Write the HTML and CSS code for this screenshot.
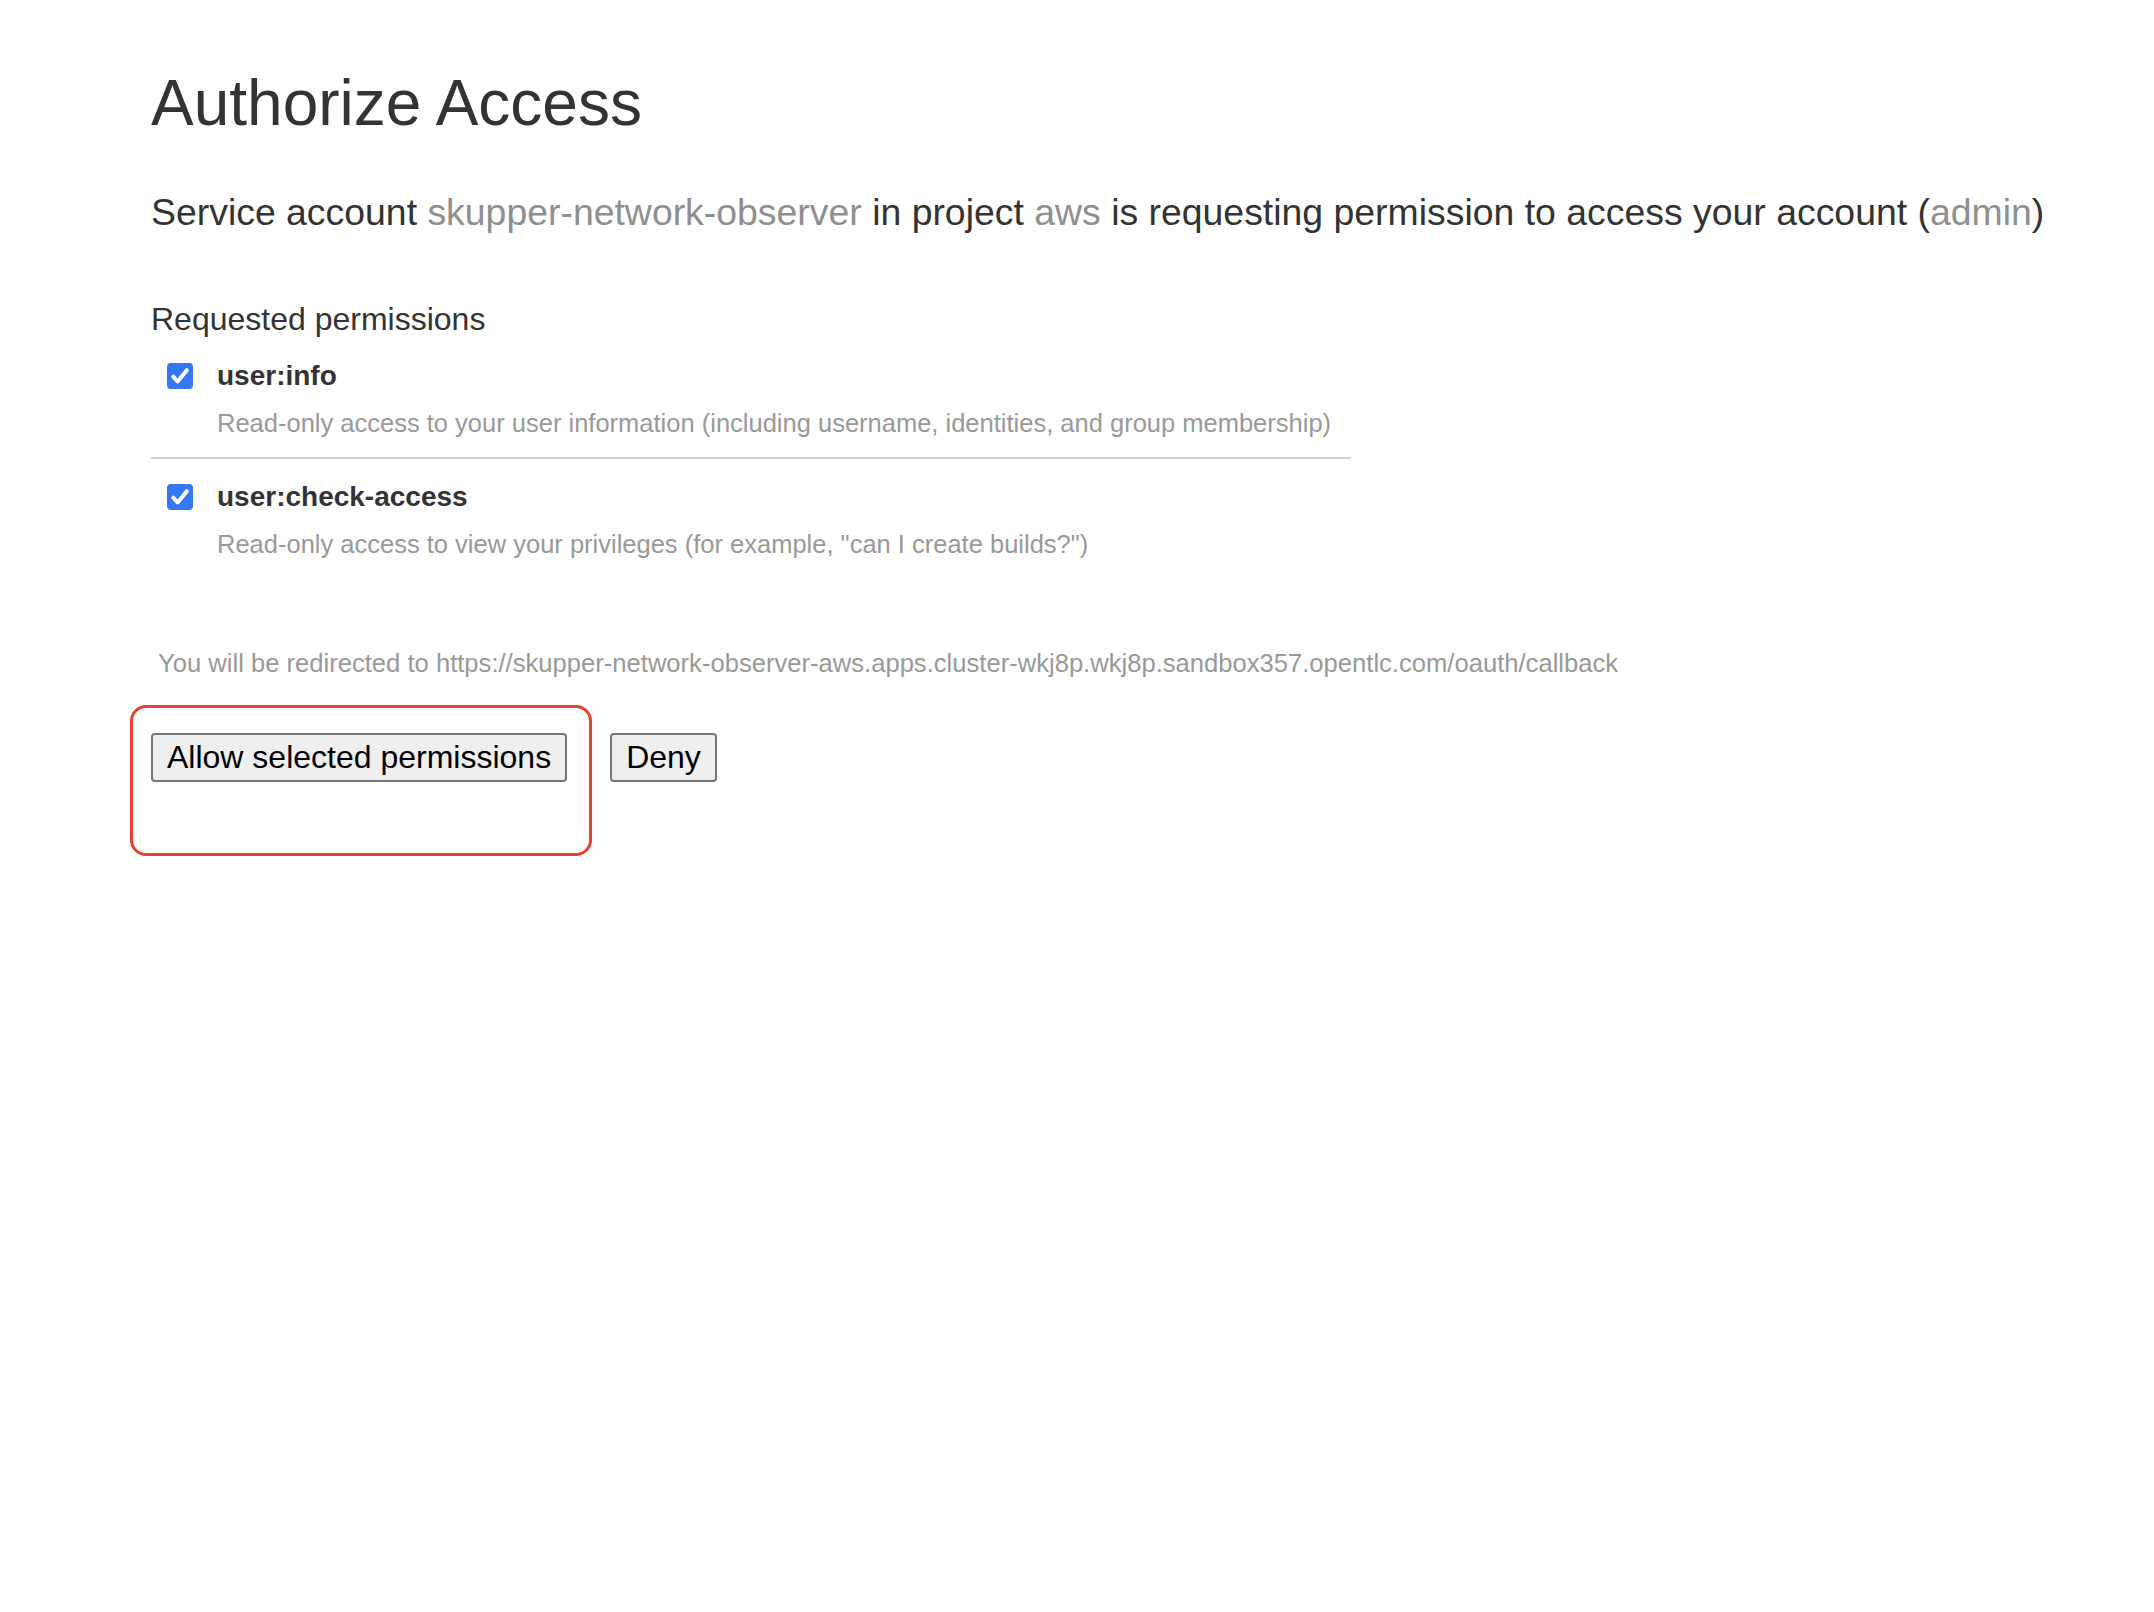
FILE: index.html
```html
<!DOCTYPE html>
<html lang="en">
<head>
<meta charset="utf-8">
<title>Authorize Access</title>
<link rel="stylesheet" href="styles.css">
</head>
<body>
<main class="page">
  <h1 class="title">Authorize Access</h1>
  <p class="lead">Service account <span class="muted">skupper-network-observer</span> in project <span class="muted">aws</span> is requesting permission to access your account (<span class="muted">admin</span>)</p>

  <h2 class="section">Requested permissions</h2>
  <ul class="perms">
    <li class="perm">
      <div class="perm-head">
        <span class="check"><svg viewBox="0 0 26 26" width="26" height="26"><rect x="0" y="0" width="26" height="26" rx="4" fill="#3478f6"/><path d="M6.2 13.6 L10.6 18.4 L19.8 7.2" fill="none" stroke="#fff" stroke-width="4" stroke-linecap="round" stroke-linejoin="round"/></svg></span>
        <span class="perm-name">user:info</span>
      </div>
      <div class="perm-desc">Read-only access to your user information (including username, identities, and group membership)</div>
    </li>
    <li class="perm">
      <div class="perm-head">
        <span class="check"><svg viewBox="0 0 26 26" width="26" height="26"><rect x="0" y="0" width="26" height="26" rx="4" fill="#3478f6"/><path d="M6.2 13.6 L10.6 18.4 L19.8 7.2" fill="none" stroke="#fff" stroke-width="4" stroke-linecap="round" stroke-linejoin="round"/></svg></span>
        <span class="perm-name">user:check-access</span>
      </div>
      <div class="perm-desc">Read-only access to view your privileges (for example, "can I create builds?")</div>
    </li>
  </ul>

  <p class="redirect">You will be redirected to https://skupper-network-observer-aws.apps.cluster-wkj8p.wkj8p.sandbox357.opentlc.com/oauth/callback</p>

  <div class="actions">
    <div class="allow-wrap">
      <button class="btn" type="button">Allow selected permissions</button>
      <span class="highlight"></span>
    </div>
    <button class="btn" type="button">Deny</button>
  </div>
</main>
</body>
</html>
```

FILE: styles.css
```css
html, body {
  margin: 0;
  padding: 0;
  background: #ffffff;
}

body {
  font-family: "Liberation Sans", Arial, Helvetica, sans-serif;
  color: #333333;
}

.page {
  box-sizing: border-box;
  min-height: 100vh;
  padding: 65px 0 0 151px;
}

.title {
  margin: 0;
  font-size: 64px;
  line-height: 76px;
  font-weight: 400;
  color: #333333;
}

.lead {
  margin: 49px 0 0 0;
  font-size: 37.4px;
  line-height: 44px;
  color: #333333;
  white-space: nowrap;
}

.muted {
  color: #8f8f8f;
}

.section {
  margin: 66px 0 0 0;
  font-size: 32px;
  line-height: 38px;
  font-weight: 400;
  color: #333333;
}

.perms {
  list-style: none;
  margin: 21px 0 0 0;
  padding: 0;
  width: 1200px;
}

.perm {
  padding-bottom: 18px;
}

.perm + .perm {
  border-top: 2px solid #d2d2d2;
  padding-top: 21px;
  padding-bottom: 20px;
}

.perm-head {
  display: flex;
  align-items: center;
  gap: 24px;
  padding-left: 16px;
  height: 34px;
}

.check {
  display: flex;
  width: 26px;
  height: 26px;
}

.perm-name {
  font-size: 28px;
  line-height: 34px;
  font-weight: 700;
  color: #333333;
}

.perm-desc {
  margin: 14px 0 0 66px;
  font-size: 25.5px;
  line-height: 32px;
  color: #999999;
}

.redirect {
  margin: 67px 0 0 7px;
  font-size: 25.6px;
  line-height: 32px;
  color: #999999;
  white-space: nowrap;
}

.actions {
  display: flex;
  align-items: flex-start;
  gap: 43px;
  margin-top: 54px;
}

.allow-wrap {
  position: relative;
  display: flex;
}

.btn {
  font-family: "Liberation Sans", Arial, Helvetica, sans-serif;
  font-size: 32px;
  line-height: 37px;
  height: 49px;
  padding: 4px 14px;
  color: #000000;
  background: #efefef;
  border: 2px solid #767676;
  border-radius: 4px;
  margin: 0;
}

.highlight {
  position: absolute;
  left: -21px;
  top: -28px;
  width: 462px;
  height: 151px;
  box-sizing: border-box;
  border: 3px solid #e8412c;
  border-radius: 16px;
  pointer-events: none;
}
```
